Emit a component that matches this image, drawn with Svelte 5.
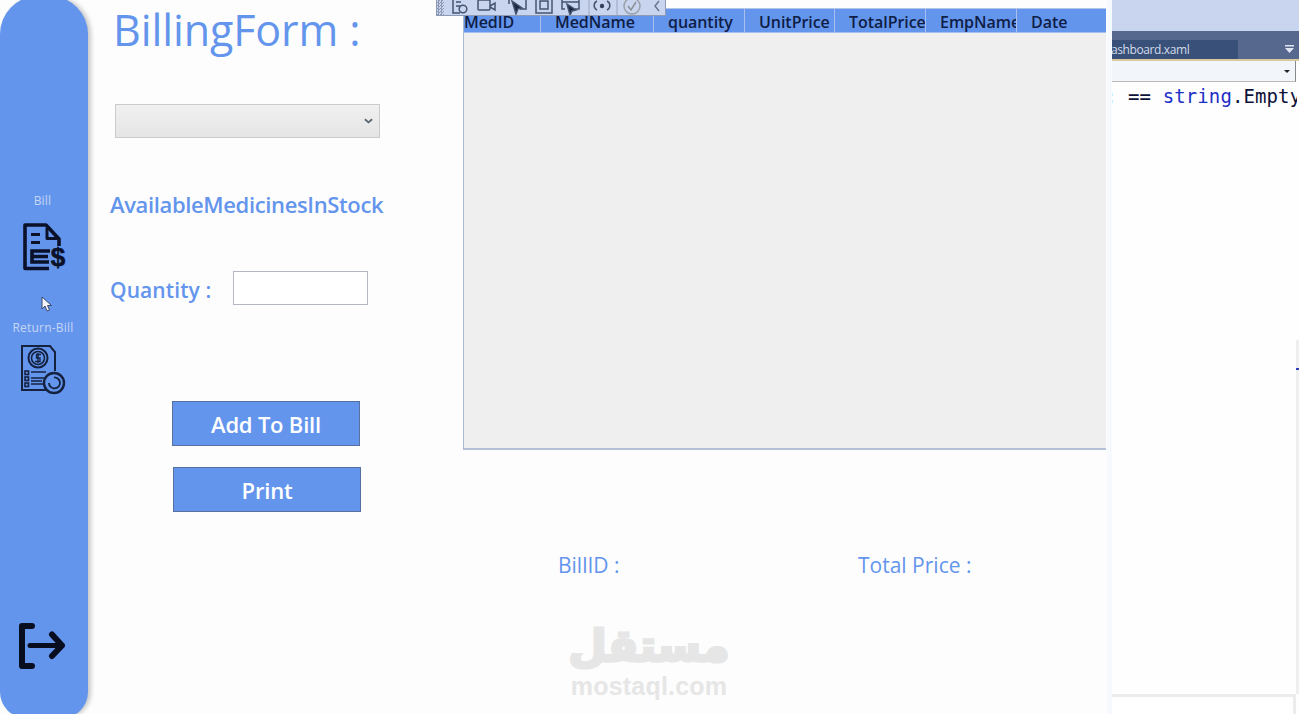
<script>
  const columns = [
    { name: 'MedID', width: 77, flush: true },
    { name: 'MedName', width: 113 },
    { name: 'quantity', width: 91 },
    { name: 'UnitPrice', width: 90 },
    { name: 'TotalPrice', width: 91 },
    { name: 'EmpName', width: 91 },
    { name: 'Date', width: 89 },
  ];
</script>

<div class="screen">
  <aside class="sidebar">
    <span class="nav-label">Bill</span>
    <svg class="bill-icon" viewBox="0 0 46 48" width="46" height="48" fill="none" stroke="#0a1128" stroke-width="3.600">
      <path d="M27 45.500H3V2H24L37 16V23" stroke-linejoin="round" />
      <path d="M25 5V15.500H35" fill="none" stroke-width="3" stroke-linejoin="round" />
      <path d="M9 11.500H18M9 19.500H18" stroke-width="3.200" />
      <path d="M28 28H10V39H27M10 33.500H26" />
      <text x="36" y="43" class="dollar" text-anchor="middle">$</text>
    </svg>
    <span class="nav-label second">Return-Bill</span>
    <svg class="return-icon" viewBox="0 0 46 50" width="46" height="50" fill="none" stroke="#14213f" stroke-width="1.600">
      <path d="M26 45H2V1H30L35 7V26" stroke-width="2" />
      <circle cx="18" cy="13" r="9.500" stroke-width="2" />
      <circle cx="18" cy="13" r="6.500" />
      <path d="M21 9.500H16.500V13H20V16.500H15M18 8V18" stroke-width="1.300" />
      <rect x="5" y="26" width="3.500" height="3.500" />
      <rect x="5" y="32" width="3.500" height="3.500" />
      <rect x="5" y="38" width="3.500" height="3.500" />
      <path d="M11 27H26M11 33H24M11 39H23M11 36H22" stroke-width="1.500" />
      <circle cx="34" cy="38" r="10" stroke-width="2.400" />
      <path d="M29 38a5.500 5.500 0 1 0 5-5.500" stroke-width="1.800" />
    </svg>
    <svg class="logout-icon" viewBox="0 0 48 46" width="48" height="46" fill="none" stroke="#080d20" stroke-linecap="round" stroke-linejoin="round">
      <path d="M15 3H5V43H15" stroke-width="6" />
      <path d="M13 22.500H44" stroke-width="5" />
      <path d="M35 11.500L45 22.500L35 33" stroke-width="6" />
    </svg>
  </aside>

  <main class="content">
    <section class="form">
      <h1>BillingForm :</h1>
      <div class="combo">
        <svg viewBox="0 0 10 6" width="9" height="6" fill="none" stroke="#5c6472" stroke-width="2"><path d="M1 1l4 3.500L9 1" /></svg>
      </div>
      <p class="stock">AvailableMedicinesInStock</p>
      <div class="qty">
        <label for="qty">Quantity :</label>
        <input id="qty" type="text" />
      </div>
      <button class="first">Add To Bill</button>
      <button class="second">Print</button>
    </section>

    <section class="right">
      <div class="grid">
        <div class="grid-head">
          {#each columns as c}
            <div class="cell" class:flush={c.flush} style="width: {c.width}px">{c.name}</div>
          {/each}
        </div>
      </div>
      <div class="totals">
        <span class="bill-id">BillID :</span>
        <span>Total Price :</span>
      </div>
    </section>
  </main>

  <div class="editor">
    <div class="ed-top"></div>
    <div class="ed-tabs">
      <span class="ed-tab">ashboard.xaml</span>
      <svg viewBox="0 0 9 8" width="9" height="8" fill="#dfe5f2"><path d="M0 0h9v1.500H0zM0 3h9L4.500 8z" /></svg>
    </div>
    <div class="ed-combo">
      <svg viewBox="0 0 6 3" width="6" height="3" fill="#222"><path d="M0 0h6L3 3z" /></svg>
    </div>
    <div class="ed-code">: == <b>string</b>.Empty</div>
    <div class="ed-bottom"></div>
  </div>

  <div class="toolbar">
    <div class="grip"></div>
    <svg viewBox="0 0 212 16" width="212" height="16" fill="none" stroke="#45536f" stroke-width="1.500">
      <path d="M1 -2V13H8M4 2H9M4 6H8" />
      <circle cx="11" cy="9" r="3.800" />
      <rect x="26" y="0" width="12" height="10" rx="1" />
      <path d="M38 6l5-3V10L38 7" />
      <path d="M57 -2V4M74 -2V9H68" />
      <path d="M60 1L70 8L66 9L64 14Z" fill="#1c2740" />
      <rect x="84" y="-2" width="16" height="15" />
      <rect x="88" y="1" width="8" height="8" />
      <path d="M110 -2V9H113M127 -2V9H123M110 2H127" />
      <path d="M115 4L124 10L120 11L118 15Z" fill="#1c2740" />
      <path d="M137 -4V16M165 -4V16" stroke="#aab6cf" />
      <path d="M145 1a5 5 0 0 0 0 9M155 1a5 5 0 0 1 0 9" />
      <circle cx="150" cy="6" r="2.200" fill="#33415f" stroke="none" />
      <circle cx="180" cy="6" r="8" stroke="#9aa0a8" />
      <path d="M176 6l3 4 5-8" stroke="#8b9096" />
      <path d="M207 1l-4 5 4 5" stroke="#69758c" />
    </svg>
  </div>

  <svg class="pointer" viewBox="0 0 12 16" width="12" height="16">
    <path d="M1 1V13L4 10L6 15L8.500 14L6.500 9.500H10.500Z" fill="#f4f6fb" stroke="#3d4a66" stroke-width="1" />
  </svg>

  <div class="watermark">
    <span class="ar">مستقل</span>
    <span class="en">mostaql.com</span>
  </div>

  <div class="scroll-mark"></div>
</div>

<style>
  :global(body) { margin: 0; background: #fff; }

  .screen {
    position: relative;
    display: flex;
    width: 1299px;
    height: 714px;
    overflow: hidden;
    background: #fdfdfd;
    font-family: "Open Sans", "Noto Sans", sans-serif;
  }

  .sidebar {
    flex: 0 0 88px;
    display: flex;
    flex-direction: column;
    align-items: center;
    box-sizing: border-box;
    height: 722px;
    margin-top: -4px;
    padding-top: 197px;
    padding-bottom: 49px;
    background: #6495ed;
    border-radius: 38px 38px 26px 26px;
    box-shadow: 3px 0 4px #c9c9c9;
    position: relative;
  }
  .nav-label { margin-left: -3px; color: #c5d5f5; font-size: 12px; line-height: 16px; letter-spacing: 0.2px; }
  .nav-label.second { margin-top: 49px; margin-left: -2px; }
  .bill-icon { margin-top: 14px; margin-left: 2px; }
  .return-icon { margin-top: 9px; margin-left: -3px; }
  .logout-icon { margin-top: auto; margin-left: -6px; }
  .dollar { font: bold 26px "Liberation Sans", sans-serif; fill: #0a1128; stroke: #0a1128; stroke-width: 0.6; }

  .content { flex: 0 0 1019px; display: flex; padding-left: 6px; box-sizing: border-box; }

  .form {
    flex: 0 0 369px;
    display: flex;
    flex-direction: column;
    align-items: flex-start;
    padding-left: 16px;
    box-sizing: border-box;
    color: #6495ed;
  }
  h1 {
    margin: 0;
    padding-left: 3px;
    font-size: 43px;
    line-height: 60px;
    font-weight: 400;
    letter-spacing: -0.1px;
  }
  .combo {
    display: flex;
    align-items: center;
    justify-content: flex-end;
    box-sizing: border-box;
    width: 265px;
    height: 34px;
    margin: 44px 0 0 5px;
    padding-right: 6px;
    background: linear-gradient(#f0f0f0, #e5e5e5);
    border: 1px solid #c8cccc;
  }
  .stock {
    margin: 51px 0 0;
    font-size: 22px;
    line-height: 30px;
    font-weight: 600;
    letter-spacing: -0.36px;
  }
  .qty { display: flex; align-items: center; margin-top: 52px; }
  .qty label { width: 123px; margin-top: 4px; font-size: 21px; font-weight: 600; letter-spacing: 0.1px; }
  .qty input {
    box-sizing: border-box;
    width: 135px;
    height: 34px;
    padding: 0;
    background: #fff;
    border: 1px solid #b4b8c0;
  }
  button {
    box-sizing: border-box;
    width: 188px;
    height: 45px;
    padding: 0;
    color: #fff;
    background: #6495ed;
    border: 1px solid #56709f;
    font: 600 22px "Open Sans", sans-serif;
    letter-spacing: -0.2px;
  }
  button.first { margin: 96px 0 0 62px; }
  button.second { margin: 21px 0 0 63px; }

  .right { flex: 0 0 644px; padding-top: 8px; box-sizing: border-box; }
  .grid {
    box-sizing: border-box;
    width: 643px;
    height: 442px;
    background: #efefef;
    border-left: 1px solid #a9b8d6;
    border-bottom: 2px solid #b4c0d8;
  }
  .grid-head {
    display: flex;
    height: 25px;
    background: #6495ed;
    border-top: 1px solid #b3c4e8;
    box-sizing: border-box;
    border-bottom: 1px solid #a9c0ee;
  }
  .cell {
    box-sizing: border-box;
    padding-left: 14px;
    overflow: hidden;
    white-space: nowrap;
    color: #0f1d45;
    font-size: 16px;
    line-height: 27px;
    font-weight: 600;
    border-right: 1px solid #a9c0ee;
    letter-spacing: -0.05px;
  }
  .cell:last-child { border-right: 0; }
  .cell.flush { padding-left: 0; }

  .totals {
    display: flex;
    padding: 101px 0 0 95px;
    color: #6495ed;
    font-size: 21px;
    line-height: 28px;
  }
  .bill-id { width: 300px; }

  .editor {
    flex: 1;
    display: flex;
    flex-direction: column;
    padding-left: 5px;
    box-shadow: inset 5px 0 0 #f6f9fd;
    background: #fefefe;
    min-width: 0;
  }
  .ed-top { height: 31px; background: #c9d5ee; }
  .ed-tabs {
    display: flex;
    align-items: flex-end;
    justify-content: space-between;
    height: 28px;
    padding-right: 5px;
    background: #57688f;
    border-bottom: 2px solid #d8c9a0;
  }
  .ed-tab {
    width: 126px;
    height: 19px;
    overflow: hidden;
    text-indent: -1px;
    color: #d3dbea;
    background: #395079;
    font-size: 12px;
    line-height: 19px;
    letter-spacing: -0.4px;
  }
  .ed-tabs svg { margin-bottom: 6px; }
  .ed-combo {
    display: flex;
    align-items: center;
    justify-content: flex-end;
    box-sizing: border-box;
    height: 21px;
    width: 184px;
    padding-right: 5px;
    background: #f2f5fa;
    border-right: 1px solid #888;
    border-bottom: 1px solid #b9b9b9;
  }
  .ed-code {
    margin-top: 3px;
    margin-right: 2px;
    text-indent: -7px;
    color: #0c1238;
    font-family: "DejaVu Sans Mono", monospace;
    font-size: 19px;
    line-height: 22px;
    white-space: nowrap;
    overflow: hidden;
    letter-spacing: 0.1px;
  }
  .ed-code b { color: #1f30c8; font-weight: 400; }
  .ed-bottom {
    margin-top: auto;
    box-sizing: border-box;
    height: 20px;
    margin-right: 3px;
    background: #fff;
    border-top: 3px solid #ececec;
    border-right: 3px solid #ececec;
  }

  .toolbar {
    position: absolute;
    top: 0;
    left: 436px;
    display: flex;
    width: 230px;
    height: 16px;
    overflow: hidden;
    background: #c9d5ee;
    border: 1px solid #8c9ab5;
    border-top: 0;
    box-sizing: border-box;
  }
  .grip {
    flex: 0 0 7px;
    margin-right: 8px;
    background: repeating-conic-gradient(#8f9ab2 0 25%, #c9d5ee 0 50%) 0 0 / 3px 3px;
  }
  .pointer { position: absolute; left: 41px; top: 296px; }

  .watermark {
    position: absolute;
    left: 570px;
    top: 619px;
    display: flex;
    flex-direction: column;
    align-items: center;
    width: 158px;
    color: #e6e6e6;
  }
  .ar { font: bold 44px/54px "DejaVu Sans", sans-serif; -webkit-text-stroke: 3px #e6e6e6; }
  .en { font: bold 25px/26px "Liberation Sans", sans-serif; letter-spacing: 0.2px; }

  .scroll-mark {
    position: absolute;
    right: 0;
    top: 340px;
    width: 3px;
    height: 354px;
    background: linear-gradient(#2c3fc0 0 0) 0 28px / 3px 2px no-repeat, #efefef;
  }
</style>
